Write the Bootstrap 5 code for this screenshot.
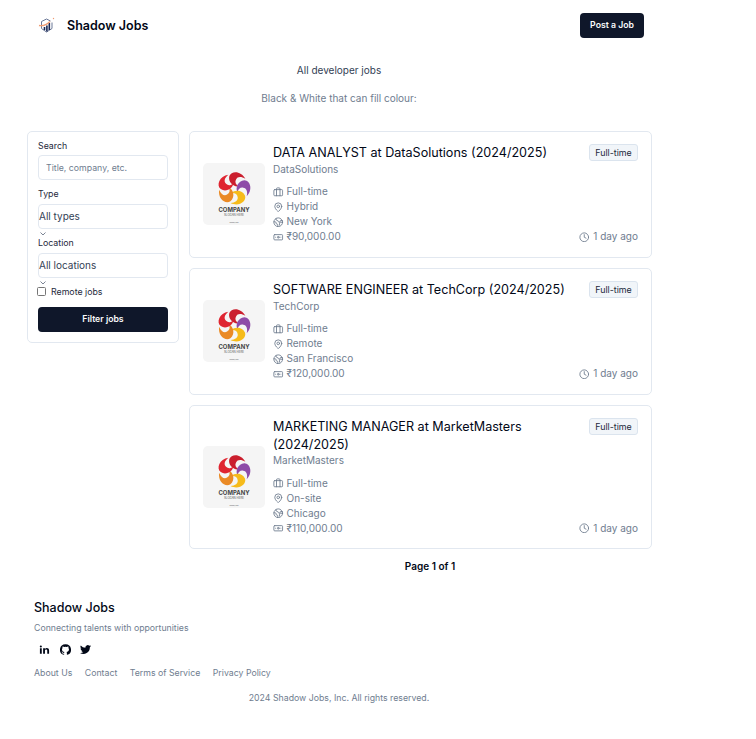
<!DOCTYPE html>
<html lang="en">
<head>
<meta charset="utf-8">
<meta name="viewport" content="width=device-width, initial-scale=1">
<title>Shadow Jobs</title>
<link href="https://cdn.jsdelivr.net/npm/bootstrap@5.3.0/dist/css/bootstrap.min.css" rel="stylesheet">
<style>
body{font-family:Inter,"Liberation Sans",sans-serif;font-size:10px;line-height:15px;color:#020817;background:#fff}
.page{width:678px}
.topbar{height:50px;padding:0 34px}
.brand{font-size:12.5px;font-weight:600;gap:8px;color:#020817}
.btn-dark-navy{--bs-btn-color:#f8fafc;--bs-btn-bg:#0f172a;--bs-btn-hover-color:#f8fafc;--bs-btn-hover-bg:#1e293b;font-size:8.7px;font-weight:600;line-height:13px;border:0;border-radius:4px;height:25px;padding:0}
.post{width:64px}
.intro{padding-top:13px;color:#334155}
.intro p{margin:0 0 13px}
.muted{color:#6f7d8f}
.layout{padding:12px 26px 0 27px;gap:10px}
.filter{width:152px;height:212px;border:1px solid #e2e8f0;border-radius:5px;padding:7px 10px 0;flex:none}
.filter label{display:block;font-size:8.8px;line-height:13px;color:#1e293b}
.field{height:25px;font-size:8.75px;border:1px solid #e2e8f0;border-radius:4px;padding:0 7px;color:#334155;line-height:23px}
.field::placeholder{color:#6f7d8f}
.search{margin:3px 0 7px}
.pick{font-size:10px;padding:0;margin-top:4px}
.caret{display:block;width:10px;height:6px;margin-top:2px;margin-bottom:-1px}
.remote{gap:5px}
.form-check-input.tick{width:9px;height:9px;margin:0 0 0 -1px;border:1px solid #767676;border-radius:1.5px;flex:none}
.submit{margin-top:9px}
.jobs{width:463px}
.job{border:1px solid #e2e8f0;border-radius:5px;padding:12.45px 13px 12.65px;margin-bottom:10px;gap:8px}
.thumb{width:62px;height:62px;flex:none}
.job h2{font-size:12.6px;line-height:17.3px;font-weight:400;margin:0;color:#020817}
.facts{margin-top:7.6px}
.facts div{gap:3px}
.ico{width:10.5px;height:10.5px;fill:none;stroke:currentColor;stroke-width:2;stroke-linecap:round;stroke-linejoin:round;flex:none}
.kind{font-size:8.9px;line-height:13px;border:1px solid #dbe4ee;background:#f1f5f9;border-radius:3px;padding:1px 5px;width:49px;height:17px;text-align:center;color:#1e293b;white-space:nowrap}
.pager{font-size:10px;font-weight:600;padding-left:19px}
.foot{padding:24.7px 34px 0;font-size:8.75px}
.foot h3{font-size:12.5px;line-height:18px;font-weight:500;margin:0;color:#020817}
.foot a{color:#6f7d8f;text-decoration:none}
.tagline{margin-top:4px}
.social{gap:9.5px;padding-left:5px;margin-top:8px}
.social svg{width:11px;height:11px;fill:#020817}
.links{gap:12.5px;margin-top:11px}
.copy{margin-top:10px}
</style>
<script src="https://cdn.jsdelivr.net/npm/bootstrap@5.3.0/dist/js/bootstrap.bundle.min.js"></script>
</head>
<body>
<svg class="d-none">
<symbol id="case" viewBox="0 0 24 24"><rect x="2" y="6" width="20" height="14" rx="2"/><path d="M8 6V4a2 2 0 0 1 2-2h4a2 2 0 0 1 2 2v2M8 6v14M16 6v14"/></symbol>
<symbol id="pin" viewBox="0 0 24 24"><path d="M20 10c0 6-8 12-8 12s-8-6-8-12a8 8 0 0 1 16 0Z"/><circle cx="12" cy="10" r="3"/></symbol>
<symbol id="globe" viewBox="0 0 24 24"><path d="M21.5 12H17a2 2 0 0 0-2 2v4.500M7 3.300V5a3 3 0 0 0 3 3 2 2 0 0 1 2 2c0 1.100.9 2 2 2a2 2 0 0 0 2-2c0-1.100.9-2 2-2h3.200M11 22v-4a2 2 0 0 0-2-2 2 2 0 0 1-2-2v-1a2 2 0 0 0-2-2H2"/><circle cx="12" cy="12" r="10"/></symbol>
<symbol id="cash" viewBox="0 0 24 24"><rect x="2" y="6" width="20" height="12" rx="2"/><circle cx="12" cy="12" r="2"/><path d="M6 12h.01M18 12h.01"/></symbol>
<symbol id="clock" viewBox="0 0 24 24"><circle cx="12" cy="12" r="10"/><path d="M12 6v6l4 2"/></symbol>
<symbol id="chev" viewBox="0 0 10 6"><path d="M2.500 1.500 5 4 7.500 1.500" fill="none" stroke="#7b8494"/></symbol>
<symbol id="company" viewBox="0 0 62 62">
<rect width="62" height="62" rx="5" fill="#f5f5f5"/>
<g transform="translate(31 25.500) rotate(6) scale(1.08)">
<path d="M4-2.500C0-1-6.500-5-5.500-11C-4-16.500 5-17 9.500-10C5.500-12 2-11.500 1-8.500C0-6 1-4 4-2.500Z" fill="#cb1f2e"/>
<path d="M4-2.500C0-1-6.500-5-5.500-11C-4-16.500 5-17 9.500-10C5.500-12 2-11.500 1-8.500C0-6 1-4 4-2.500Z" fill="#8e4ba8" transform="rotate(72)"/>
<path d="M4-2.500C0-1-6.500-5-5.500-11C-4-16.500 5-17 9.500-10C5.500-12 2-11.500 1-8.500C0-6 1-4 4-2.500Z" fill="#f6bb1b" transform="rotate(144)"/>
<path d="M4-2.500C0-1-6.500-5-5.500-11C-4-16.500 5-17 9.500-10C5.500-12 2-11.500 1-8.500C0-6 1-4 4-2.500Z" fill="#ea8a25" transform="rotate(216)"/>
<path d="M4-2.500C0-1-6.500-5-5.500-11C-4-16.500 5-17 9.500-10C5.500-12 2-11.500 1-8.500C0-6 1-4 4-2.500Z" fill="#df2531" transform="rotate(288)"/>
</g>
<text x="31" y="48.500" text-anchor="middle" font-size="6.300" font-weight="700" fill="#444" textLength="31" lengthAdjust="spacingAndGlyphs">COMPANY</text>
<text x="31" y="53" text-anchor="middle" font-size="3.200" fill="#555" textLength="20" lengthAdjust="spacingAndGlyphs">SLOGAN HERE</text>
<text x="31" y="60" text-anchor="middle" font-size="1.800" fill="#555" textLength="9" lengthAdjust="spacingAndGlyphs">company.com</text>
</symbol>
</svg>
<div class="page">
<header class="topbar d-flex align-items-center justify-content-between">
<div class="brand d-flex align-items-center">
<svg width="25" height="25" viewBox="0 0 25 25"><path d="M16.500 8 12.500 6 7.500 8.500v7l5 3.500 5.500-3.500v-6" fill="none" stroke="#6b7897"/><path d="M10.500 17v-3M12.900 18.500v-6M15.300 17v-7" stroke="#172654" stroke-width="1.600"/><path d="M5 12.500c5 1 8-1 11-4" fill="none" stroke="#ef9b72" stroke-width="1.300"/><circle cx="19.500" cy="5.500" r=".7" fill="#ef9b72"/></svg>
<span>Shadow Jobs</span></div>
<a class="btn btn-dark-navy post d-flex align-items-center justify-content-center" href="#">Post a Job</a>
</header>
<section class="intro text-center"><p>All developer jobs</p><p class="muted">Black &amp; White that can fill colour:</p></section>
<main class="layout d-flex align-items-start">
<aside class="filter">
<label for="q">Search</label><input id="q" class="field w-100 d-block bg-white search" placeholder="Title, company, etc.">
<label>Type</label><div class="field pick">All types</div><svg class="caret"><use href="#chev"/></svg>
<label>Location</label><div class="field pick">All locations</div><svg class="caret"><use href="#chev"/></svg>
<div class="remote d-flex align-items-center"><input id="r" class="tick form-check-input" type="checkbox"><label for="r">Remote jobs</label></div>
<button class="btn btn-dark-navy w-100 submit">Filter jobs</button>
</aside>
<div class="jobs">
<article class="job d-flex"><svg class="thumb align-self-center"><use href="#company"/></svg>
<div class="flex-grow-1"><h2>DATA ANALYST at DataSolutions (2024/2025)</h2><div class="muted">DataSolutions</div>
<div class="facts muted"><div class="d-flex align-items-center"><svg class="ico"><use href="#case"/></svg>Full-time</div><div class="d-flex align-items-center"><svg class="ico"><use href="#pin"/></svg>Hybrid</div><div class="d-flex align-items-center"><svg class="ico"><use href="#globe"/></svg>New York</div><div class="d-flex align-items-center"><svg class="ico"><use href="#cash"/></svg>₹90,000.00</div></div></div>
<div class="d-flex flex-column justify-content-between align-items-end flex-shrink-0"><span class="kind">Full-time</span><span class="muted d-flex align-items-center gap-1"><svg class="ico"><use href="#clock"/></svg>1 day ago</span></div></article>
<article class="job d-flex"><svg class="thumb align-self-center"><use href="#company"/></svg>
<div class="flex-grow-1"><h2>SOFTWARE ENGINEER at TechCorp (2024/2025)</h2><div class="muted">TechCorp</div>
<div class="facts muted"><div class="d-flex align-items-center"><svg class="ico"><use href="#case"/></svg>Full-time</div><div class="d-flex align-items-center"><svg class="ico"><use href="#pin"/></svg>Remote</div><div class="d-flex align-items-center"><svg class="ico"><use href="#globe"/></svg>San Francisco</div><div class="d-flex align-items-center"><svg class="ico"><use href="#cash"/></svg>₹120,000.00</div></div></div>
<div class="d-flex flex-column justify-content-between align-items-end flex-shrink-0"><span class="kind">Full-time</span><span class="muted d-flex align-items-center gap-1"><svg class="ico"><use href="#clock"/></svg>1 day ago</span></div></article>
<article class="job d-flex"><svg class="thumb align-self-center"><use href="#company"/></svg>
<div class="flex-grow-1"><h2>MARKETING MANAGER at MarketMasters (2024/2025)</h2><div class="muted">MarketMasters</div>
<div class="facts muted"><div class="d-flex align-items-center"><svg class="ico"><use href="#case"/></svg>Full-time</div><div class="d-flex align-items-center"><svg class="ico"><use href="#pin"/></svg>On-site</div><div class="d-flex align-items-center"><svg class="ico"><use href="#globe"/></svg>Chicago</div><div class="d-flex align-items-center"><svg class="ico"><use href="#cash"/></svg>₹110,000.00</div></div></div>
<div class="d-flex flex-column justify-content-between align-items-end flex-shrink-0"><span class="kind">Full-time</span><span class="muted d-flex align-items-center gap-1"><svg class="ico"><use href="#clock"/></svg>1 day ago</span></div></article>
<div class="pager text-center">Page 1 of 1</div>
</div>
</main>
<footer class="foot muted">
<h3>Shadow Jobs</h3><div class="tagline">Connecting talents with opportunities</div>
<div class="social d-flex"><svg viewBox="0 0 24 24"><path d="M2 9h4v12H2zM4 3a2.300 2.300 0 1 1 0 4.600A2.300 2.300 0 0 1 4 3M9 9h4v1.700c2-3.200 9-3 9 3.300v7h-4v-6.500c0-3.500-5-3.300-5 0V21H9z"/></svg><svg viewBox="0 0 24 24"><path d="M12 .3a12 12 0 0 0-3.800 23.400c.6.100.8-.300.800-.600v-2c-3.300.700-4-1.600-4-1.600-.6-1.400-1.400-1.800-1.400-1.800-1-.700.100-.700.100-.700 1.200 0 1.900 1.200 1.900 1.200 1 1.800 2.800 1.300 3.500 1 0-.8.400-1.300.7-1.600-2.700-.3-5.500-1.300-5.500-6 0-1.200.500-2.300 1.300-3.100-.2-.4-.6-1.600 0-3.200 0 0 1-.3 3.400 1.200a11.500 11.500 0 0 1 6 0c2.300-1.500 3.300-1.200 3.300-1.200.6 1.600.2 2.800 0 3.200.9.800 1.300 1.900 1.300 3.200 0 4.600-2.800 5.600-5.500 5.900.5.400.9 1 .9 2.200v3.300c0 .3.100.7.800.600A12 12 0 0 0 12 .3"/></svg><svg viewBox="0 0 24 24"><path d="M24 4.600a10 10 0 0 1-2.800.8 5 5 0 0 0 2.200-2.700 10 10 0 0 1-3.100 1.200 5 5 0 0 0-8.400 4.500A14 14 0 0 1 1.700 3.100a5 5 0 0 0 1.500 6.600 5 5 0 0 1-2.200-.6 5 5 0 0 0 3.900 4.900 5 5 0 0 1-2.200.1 5 5 0 0 0 4.600 3.400A10 10 0 0 1 0 19.500 14 14 0 0 0 21.500 7.100 10 10 0 0 0 24 4.600"/></svg></div>
<nav class="links d-flex"><a href="#">About Us</a><a href="#">Contact</a><a href="#">Terms of Service</a><a href="#">Privacy Policy</a></nav>
<div class="text-center copy">2024 Shadow Jobs, Inc. All rights reserved.</div>
</footer>
</div>
</body>
</html>
